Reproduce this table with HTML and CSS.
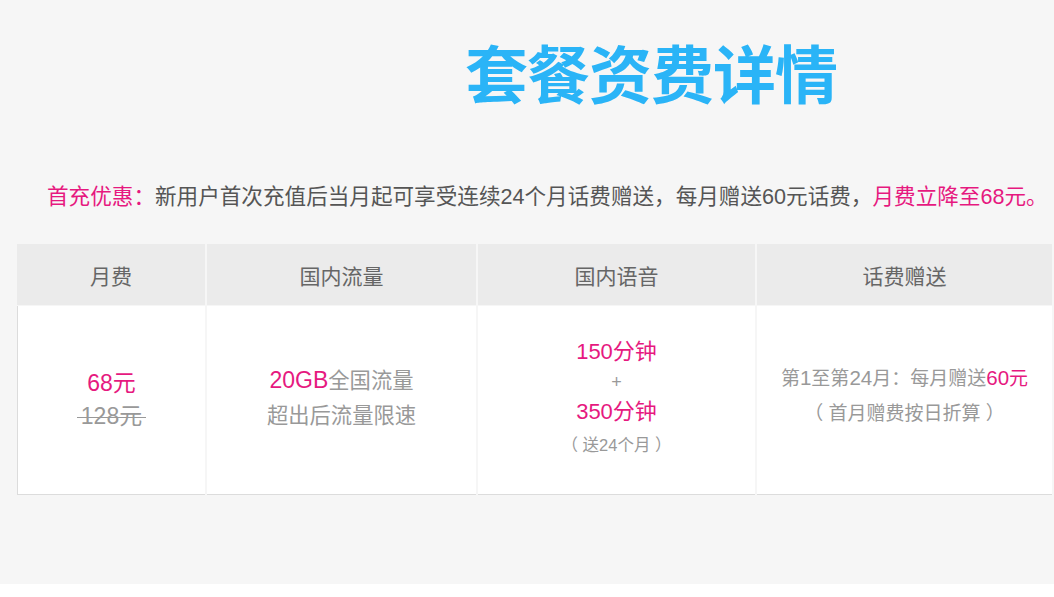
FILE: index.html
```html
<!DOCTYPE html>
<html lang="zh-CN">
<head>
<meta charset="utf-8">
<title>套餐资费详情</title>
<link rel="stylesheet" href="styles.css">
</head>
<body>
<div class="page">
  <h1 class="title">套餐资费详情</h1>
  <p class="promo"><span class="hl">首充优惠：</span>新用户首次充值后当月起可享受连续24个月话费赠送，每月赠送60元话费，<span class="hl">月费立降至68元。</span></p>
  <div class="table">
    <div class="th">月费</div>
    <div class="th">国内流量</div>
    <div class="th">国内语音</div>
    <div class="th">话费赠送</div>
    <div class="td first">
      <div class="hl">68元</div>
      <div><span class="strike">128元</span></div>
    </div>
    <div class="td flow">
      <div><span class="hl n">20GB</span>全国流量</div>
      <div>超出后流量限速</div>
    </div>
    <div class="td voice">
      <div class="hl">150分钟</div>
      <div class="plus">+</div>
      <div class="hl">350分钟</div>
      <div class="small">（ 送24个月 ）</div>
    </div>
    <div class="td gift">
      <div>第<span class="n">1</span>至第<span class="n">24</span>月：每月赠送<span class="hl n">60</span><span class="hl">元</span></div>
      <div>（ 首月赠费按日折算 ）</div>
    </div>
  </div>
</div>
</body>
</html>
```

FILE: styles.css
```css
html, body {
  margin: 0;
  padding: 0;
  background: #ffffff;
}
body {
  font-family: "Liberation Sans", "Noto Sans CJK SC", sans-serif;
}
.page {
  background: #f6f6f6;
  height: 584px;
  overflow: hidden;
}
.title {
  margin: 0;
  padding: 39px 0 0 465px;
  font-family: "Noto Sans CJK SC", sans-serif;
  font-weight: 700;
  font-size: 63px;
  line-height: 64px;
  color: #2ab4f7;
  letter-spacing: -1px;
}
.promo {
  margin: 79px 0 0 47px;
  font-size: 21.6px;
  line-height: 30px;
  color: #555;
  white-space: nowrap;
}
.hl {
  color: #e6197f;
}
.n {
  font-size: 1.08em;
}
.table {
  margin: 32px 0 0 17px;
  width: 1035px;
  display: grid;
  grid-template-columns: 188px 269px 277px 295px;
  column-gap: 2px;
  row-gap: 1px;
}
.th {
  background: #ebebeb;
  height: 61px;
  display: flex;
  align-items: center;
  justify-content: center;
  font-size: 21px;
  color: #666;
}
.td {
  box-sizing: border-box;
  background: #fff;
  height: 189px;
  border-bottom: 1px solid #dcdcdc;
  display: flex;
  flex-direction: column;
  align-items: center;
  justify-content: center;
  font-size: 21px;
  line-height: 34px;
  color: #999;
}
.td.first {
  border-left: 1px solid #dcdcdc;
  font-size: 23px;
  line-height: 33px;
}
.strike {
  color: #999;
  padding: 0 4px;
  background: linear-gradient(#999, #999) no-repeat 0 55% / 100% 1px;
}
.flow {
  font-size: 21.3px;
  line-height: 35px;
  padding-bottom: 4px;
}
.voice {
  font-size: 22px;
  line-height: 30px;
}
.voice .plus {
  font-size: 18px;
  color: #999;
}
.voice .small {
  font-size: 16.5px;
  line-height: 36px;
  color: #999;
}
.gift {
  font-size: 19px;
  line-height: 35px;
  padding-bottom: 9px;
}
```
